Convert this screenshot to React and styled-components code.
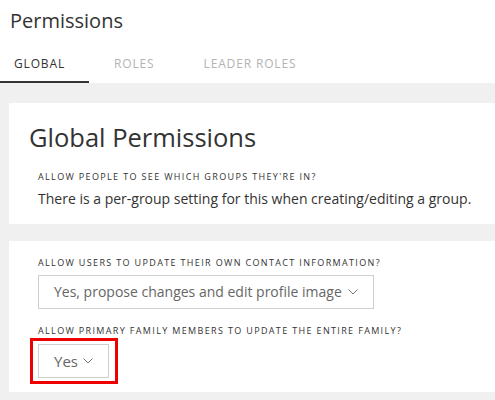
import styled, { createGlobalStyle } from "styled-components"

const Global = createGlobalStyle`
  html, body { margin: 0; padding: 0; background: #fff; }
  body { font-family: "Open Sans", "Liberation Sans", sans-serif; color: #333; }
  * { box-sizing: border-box; }
`

const Page = styled.div`
  width: 495px;
  height: 400px;
  overflow: hidden;
  display: flex;
  flex-direction: column;
`

const Header = styled.div`
  padding: 7px 0 0 10px;
`

const Title = styled.h1`
  margin: 0;
  font-size: 20px;
  font-weight: 400;
  line-height: 28px;
  color: #333;
`

const Tabs = styled.div`
  display: flex;
  margin-top: 18px;
`

const Tab = styled.div`
  padding: 0 24px 0 14px;
  margin-right: 11px;
  height: 30px;
  line-height: 22px;
  font-size: 12px;
  letter-spacing: 0.85px;
  text-transform: uppercase;
  color: ${p => (p.$active ? "#333" : "#b3b3b3")};
  border-bottom: 2px solid ${p => (p.$active ? "#333" : "transparent")};
`

const Body = styled.div`
  flex: 1;
  background: #f0f0f0;
  padding: 20px 0 0 9px;
  display: flex;
  flex-direction: column;
  gap: 17px;
`

const Card = styled.section`
  background: #fff;
  padding: ${p => p.$pad};
`

const CardTitle = styled.h2`
  margin: 0 0 16px;
  font-size: 25.5px;
  font-weight: 400;
  line-height: 34px;
  color: #333;
`

const Field = styled.div`
  padding-left: 9px;
  & + & { margin-top: 15px; }
`

const Label = styled.div`
  font-size: 9px;
  letter-spacing: 1.35px;
  text-transform: uppercase;
  color: #333;
  line-height: 14px;
`

const Text = styled.div`
  font-size: 14px;
  line-height: 20px;
  color: #333;
  margin-top: 5px;
`

const Highlight = styled.div`
  display: inline-block;
  vertical-align: top;
  border: 3px solid #ee0000;
  padding: 3px 6px 3px 5px;
  margin-left: -8px;
`

const Select = styled.div`
  display: inline-flex;
  align-items: center;
  vertical-align: top;
  height: 34px;
  border: 1px solid #cfcfcf;
  padding: 0 15px 1px 15px;
  margin-top: ${p => p.$mt || "0"};
  font-size: ${p => p.$size || "14px"};
  color: #666;
  gap: ${p => p.$gap || "6px"};
`

const Chevron = () => (
  <svg width="10" height="6" viewBox="0 0 10 6">
    <polyline points="0.5,0.5 5,5 9.5,0.5" fill="none" stroke="#777" strokeWidth="1" />
  </svg>
)

export default function App() {
  return (
    <Page>
      <Global />
      <Header>
        <Title>Permissions</Title>
      </Header>
      <Tabs>
        <Tab $active>Global</Tab>
        <Tab>Roles</Tab>
        <Tab>Leader Roles</Tab>
      </Tabs>
      <Body>
        <Card $pad="17px 0 15px 20px">
          <CardTitle>Global Permissions</CardTitle>
          <Field>
            <Label>Allow people to see which groups they're in?</Label>
            <Text>There is a per-group setting for this when creating/editing a group.</Text>
          </Field>
        </Card>
        <Card $pad="15px 0 8px 20px">
          <Field>
            <Label>Allow users to update their own contact information?</Label>
            <Select $mt="5px">
              Yes, propose changes and edit profile image <Chevron />
            </Select>
          </Field>
          <Field>
            <Label>Allow primary family members to update the entire family?</Label>
            <Highlight>
              <Select $gap="5px" $size="15px">
                Yes <Chevron />
              </Select>
            </Highlight>
          </Field>
        </Card>
      </Body>
    </Page>
  )
}
